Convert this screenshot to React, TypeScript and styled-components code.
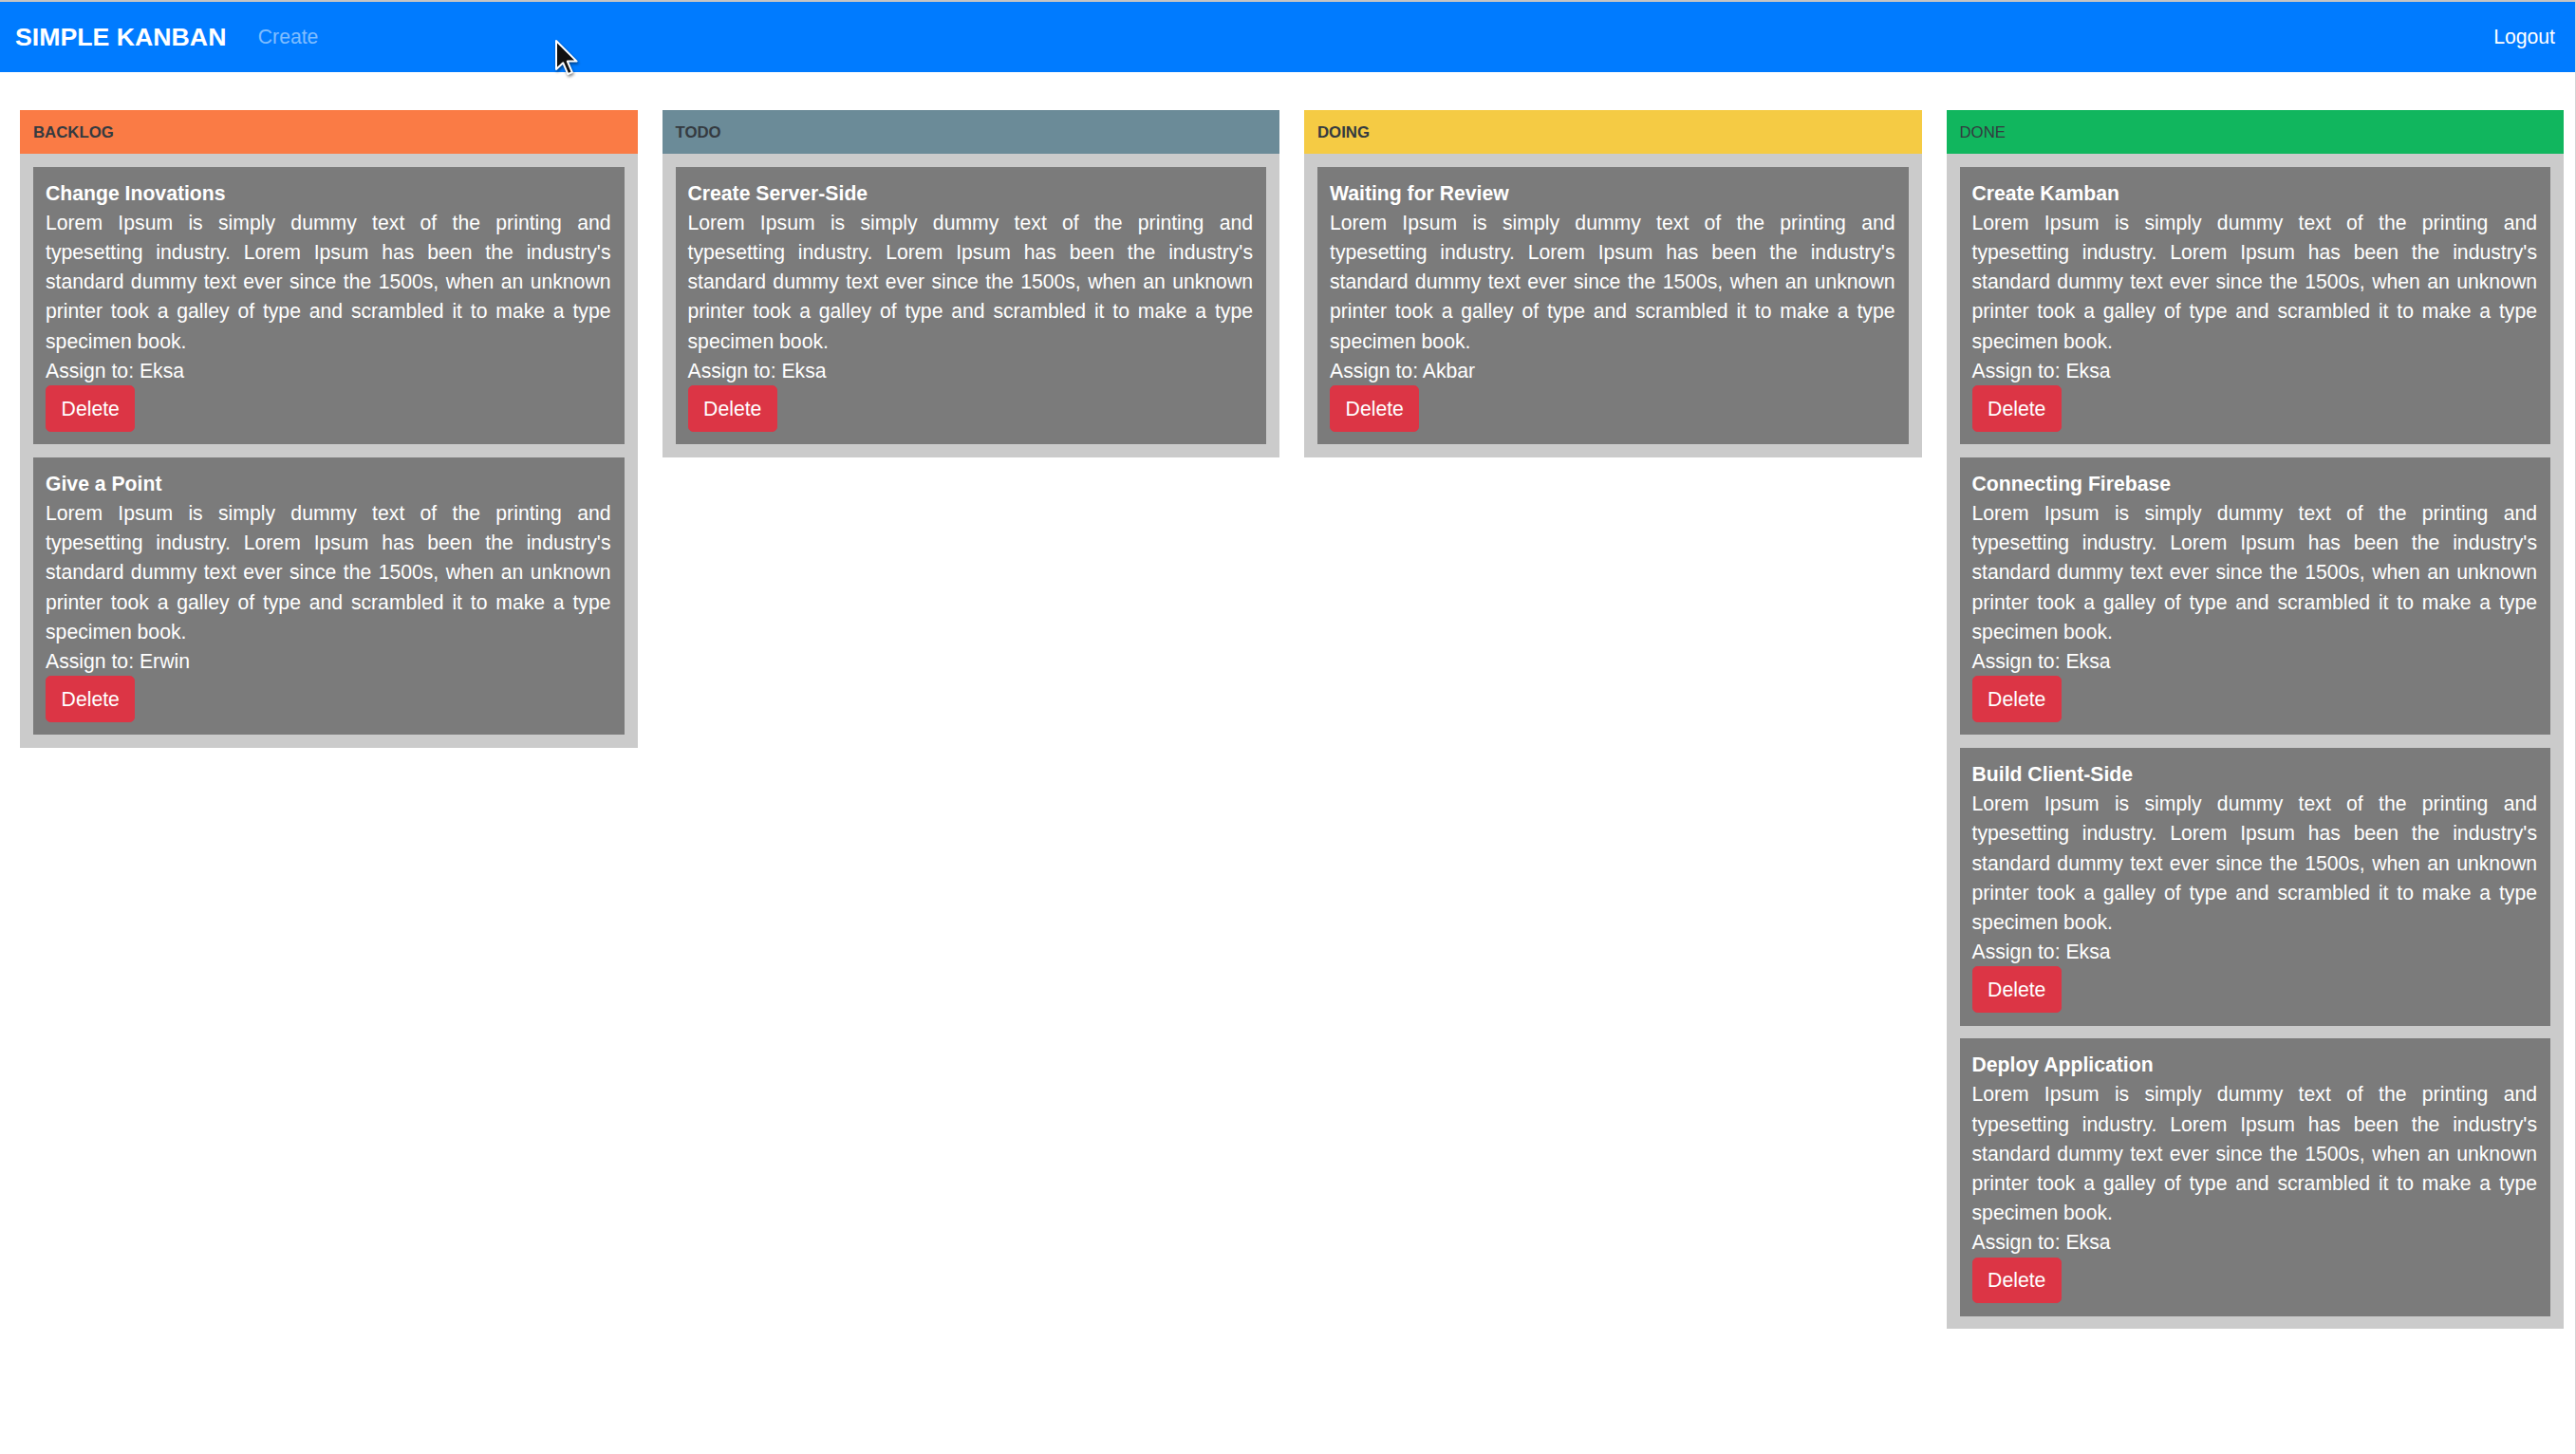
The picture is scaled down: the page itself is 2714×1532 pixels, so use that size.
import React from "react";
import styled, { createGlobalStyle } from "styled-components";

const GlobalStyle = createGlobalStyle`
  html, body {
    margin: 0;
    padding: 0;
    background: #ffffff;
  }
  body {
    font-family: "Liberation Sans", Arial, Helvetica, sans-serif;
    font-size: 21.2px;
    line-height: 31.2px;
    color: #212529;
  }
  * { box-sizing: border-box; }
`;

const Page = styled.div`
  position: relative;
  min-height: 100vh;
  border-right: 1px solid #d4d4d4;
`;

const Navbar = styled.nav`
  display: flex;
  align-items: center;
  height: 76px;
  background: #007bff;
  border-top: 2px solid #c4c4c4;
  padding: 0 21px 0 16px;
`;

const Brand = styled.span`
  color: #ffffff;
  font-weight: 700;
  font-size: 26.7px;
  line-height: 39px;
  margin-right: 23px;
`;

const NavLink = styled.a<{ $active?: boolean }>`
  color: ${(p) => (p.$active ? "#ffffff" : "rgba(255, 255, 255, 0.5)")};
  font-size: 21.2px;
  line-height: 31.2px;
  padding: 0 10.4px;
  text-decoration: none;
  cursor: pointer;
`;

const NavRight = styled.div`
  margin-left: auto;
  display: flex;
`;

const LogoutLink = styled(NavLink)`
  padding: 0;
`;

const Board = styled.main`
  display: grid;
  grid-template-columns: repeat(4, minmax(0, 1fr));
  column-gap: 26px;
  align-items: start;
  padding: 40px 12px 40px 21px;
`;

const Column = styled.section`
  display: flex;
  flex-direction: column;
`;

const ColumnHeader = styled.header<{ $bg: string; $bold: boolean }>`
  background: ${(p) => p.$bg};
  color: #343a40;
  font-size: 16.8px;
  font-weight: ${(p) => (p.$bold ? 700 : 400)};
  line-height: 25px;
  padding: 10.5px 14px;
  text-transform: uppercase;
`;

const ColumnBody = styled.div`
  background: #cbcbcb;
  padding: 13.5px 14px;
  display: flex;
  flex-direction: column;
  gap: 13.5px;
`;

const Card = styled.article`
  background: #7b7b7b;
  color: #ffffff;
  padding: 12px 14px 13.5px 13px;
  display: flex;
  flex-direction: column;
  align-items: flex-start;
`;

const CardTitle = styled.div`
  font-weight: 700;
  font-size: 21.2px;
  line-height: 31.2px;
`;

const CardText = styled.p`
  margin: 0;
  text-align: justify;
  align-self: stretch;
`;

const Assign = styled.div``;

const DeleteButton = styled.button`
  font-family: inherit;
  font-size: 21.2px;
  line-height: 31.2px;
  color: #ffffff;
  background: #dc3545;
  border: 1.3px solid #dc3545;
  border-radius: 5.2px;
  padding: 7.8px 15.6px;
  cursor: pointer;
`;

const Cursor = styled.svg`
  position: absolute;
  left: 584px;
  top: 41px;
  width: 26px;
  height: 40px;
  pointer-events: none;
  filter: drop-shadow(1px 2px 1.5px rgba(0, 0, 0, 0.45));
`;

const LOREM =
  "Lorem Ipsum is simply dummy text of the printing and typesetting industry. Lorem Ipsum has been the industry's standard dummy text ever since the 1500s, when an unknown printer took a galley of type and scrambled it to make a type specimen book.";

type Task = { title: string; assign: string };
type Col = { name: string; color: string; bold: boolean; tasks: Task[] };

const columns: Col[] = [
  {
    name: "Backlog",
    color: "#fa7b45",
    bold: true,
    tasks: [
      { title: "Change Inovations", assign: "Eksa" },
      { title: "Give a Point", assign: "Erwin" },
    ],
  },
  {
    name: "Todo",
    color: "#6b8b98",
    bold: true,
    tasks: [{ title: "Create Server-Side", assign: "Eksa" }],
  },
  {
    name: "Doing",
    color: "#f5cb44",
    bold: true,
    tasks: [{ title: "Waiting for Review", assign: "Akbar" }],
  },
  {
    name: "Done",
    color: "#11b65e",
    bold: false,
    tasks: [
      { title: "Create Kamban", assign: "Eksa" },
      { title: "Connecting Firebase", assign: "Eksa" },
      { title: "Build Client-Side", assign: "Eksa" },
      { title: "Deploy Application", assign: "Eksa" },
    ],
  },
];

export default function App() {
  return (
    <Page>
      <GlobalStyle />
      <Navbar>
        <Brand>SIMPLE KANBAN</Brand>
        <NavLink>Create</NavLink>
        <NavRight>
          <LogoutLink $active>Logout</LogoutLink>
        </NavRight>
      </Navbar>
      <Board>
        {columns.map((col) => (
          <Column key={col.name}>
            <ColumnHeader $bg={col.color} $bold={col.bold}>
              {col.name}
            </ColumnHeader>
            <ColumnBody>
              {col.tasks.map((t) => (
                <Card key={t.title}>
                  <CardTitle>{t.title}</CardTitle>
                  <CardText>{LOREM}</CardText>
                  <Assign>Assign to: {t.assign}</Assign>
                  <DeleteButton>Delete</DeleteButton>
                </Card>
              ))}
            </ColumnBody>
          </Column>
        ))}
      </Board>
      <Cursor viewBox="0 0 13 20">
        <path
          d="M1 1 L1 16 L4.6 12.6 L7.2 18.6 L9.4 17.6 L6.9 11.8 L11.8 11.8 Z"
          fill="#111111"
          stroke="#ffffff"
          strokeWidth="1"
          strokeLinejoin="round"
        />
      </Cursor>
    </Page>
  );
}
